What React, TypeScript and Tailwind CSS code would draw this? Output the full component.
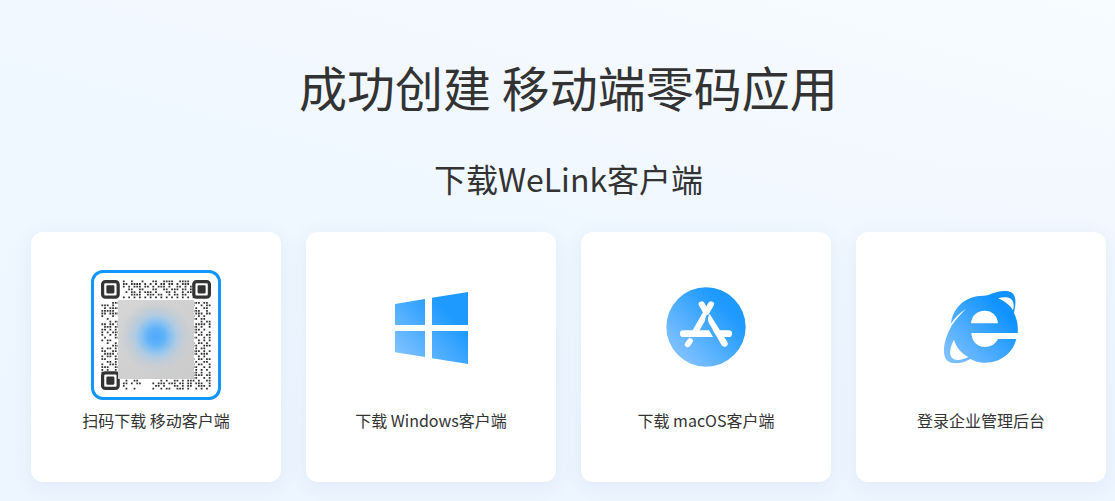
import type { ReactNode } from "react";

const TOP = [
  "#..#...#...##..####..####..",
  "##.####.#.#.#.##.##.#.###.#",
  "#.#.###.##.#.###.#..##.#.##",
  "..##..##...##..##.###.##.##",
  ".#.##.#.###.#...##.#..#.##.",
  "...####..###.##..#.##.##..#",
  "#.#.#.#.#.#.#.#.#.#.#.#.#.#",
];
const LEFT = [
  "....###", "###.#..", ".#.####", "#####..", "##.####", "#...#..", "..#....", "...#.##",
  "##.##.#", ".###.##", "##.#.#.", "#.#.###", "#..#.#.", ".#...##", "#.##...", "..#..#.",
  "....###", "#.##.#.", "##..##.", ".####.#", "#.##.#.", "##...##", "..##.#.", "#..###.",
  "###..##", "#.#..#.", "#...#.#",
];
const RIGHT = [
  "###.##.", "#..#.##", ".#..##.", "###..#.", ".###.##", "#.#.#..", "##.##..", "...#.##",
  ".####.#", "##.#..#", "###.#..", "##.#..#", "..##.##", "##..#.#", "..#.#.#", "#.##.#.",
  "##..###", ".#.##..", "###.#.#", "##.###.", "..#.#..", "#.##.##", ".#..##.", "#.##..#",
  "##..#.#", ".#.#.#.", "##.#..#",
];
const BOTTOM = [
  "#....#..#....#..#.##.#.#.#.",
  "##......#.......##.#.##.###",
  "........#....#..#.#.#.##..#",
  ".#..##........#.#..##.#.###",
  "##.#.##....#.###.###.##.##.",
  "#...........##.#...##.#.##.",
  ".#..#......#..#.##..###.#..",
];

function dots(rows: string[], x0: number, y0: number) {
  return rows
    .flatMap((row, y) =>
      [...row].map((cell, x) =>
        cell === "#" ? `M${x0 + x + 0.16} ${y0 + y + 0.16}h.66v.66h-.66z` : "",
      ),
    )
    .join("");
}

const QR_PATH =
  dots(TOP, 8, 0) +
  dots(LEFT, 0, 8) +
  dots(RIGHT, 34, 8) +
  dots(BOTTOM, 8, 34) +
  dots(RIGHT.slice(0, 6), 35, 35);

function Finder({ x, y }: { x: number; y: number }) {
  return (
    <g>
      <rect x={x + 0.6} y={y + 0.6} width="5.8" height="5.8" rx="1" fill="#fff" stroke="#333" strokeWidth="1.2" />
      <rect x={x + 2} y={y + 2} width="3" height="3" rx="0.4" fill="#333" />
    </g>
  );
}

function QrCode() {
  return (
    <div className="relative size-[130px] rounded-xl border-3 border-[#1296ff] bg-white p-[7px]">
      <svg viewBox="0 0 41 41" className="size-full" role="img" aria-label="移动客户端二维码">
        <path d={QR_PATH} fill="#333" />
        <Finder x={0} y={0} />
        <Finder x={34} y={0} />
        <Finder x={0} y={34} />
      </svg>
      <div className="absolute top-[27px] left-[24px] h-[79px] w-[76px] bg-[radial-gradient(circle_at_50%_46%,#52aafb_0,#5fb2fa_8px,#8bc2f0_15px,#b0cbe2_21px,#c6cdd4_28px,transparent_36px),linear-gradient(135deg,#d6d6d6,#cbcbcb)]" />
    </div>
  );
}

function WindowsIcon() {
  return (
    <svg viewBox="33 21 240 240" className="size-20" aria-hidden="true">
      <defs>
        <linearGradient id="win" gradientUnits="userSpaceOnUse" x1="45" y1="235" x2="200" y2="95">
          <stop stopColor="#86c5ff" />
          <stop offset="1" stopColor="#1e9aff" />
        </linearGradient>
      </defs>
      <path
        fill="url(#win)"
        d="M45 72L135 57V135H45ZM156 53L264 36V135H156ZM45 153H135V231L45 217ZM156 153H264V252L156 235Z"
      />
    </svg>
  );
}

function AppStoreIcon() {
  return (
    <svg viewBox="30 27 240 240" className="size-20" aria-hidden="true">
      <defs>
        <linearGradient id="store" gradientUnits="userSpaceOnUse" x1="65" y1="230" x2="210" y2="90">
          <stop stopColor="#80c1ff" />
          <stop offset="1" stopColor="#1e9aff" />
        </linearGradient>
      </defs>
      <circle cx="150" cy="147" r="119" fill="url(#store)" />
      <g fill="none" stroke="#fff" strokeLinecap="round">
        <path strokeWidth="18" d="M137 79L150 101M165 79L116 164" />
        <path strokeWidth="17" d="M102 189L95 199" />
        <path strokeWidth="20" d="M82 167H168" />
        <path strokeWidth="20" d="M192 167H218" />
      </g>
      <path d="M157 112C149 125 152 135 158 145L184 189" fill="none" stroke="url(#store)" strokeWidth="10" />
      <path d="M161 107C154 119 155 130 161 139L197 202C205 212 220 203 214 192L170 122Z" fill="#fff" />
    </svg>
  );
}

function ExplorerIcon() {
  return (
    <svg viewBox="27 27 240 240" className="size-20" aria-hidden="true">
      <defs>
        <linearGradient id="ie" gradientUnits="userSpaceOnUse" x1="50" y1="245" x2="210" y2="95">
          <stop stopColor="#80c1ff" />
          <stop offset="1" stopColor="#1093ff" />
        </linearGradient>
      </defs>
      <path
        fill="url(#ie)"
        fillRule="evenodd"
        d="M57 137C62 86 105 51 157 53L169 51C191 40 221 34 238 43C255 53 251 80 246 105C255 123 259 143 257 165H118C119 191 137 207 158 207C176 207 191 198 198 183H253C241 228 203 255 158 254C142 254 127 250 115 243C91 257 62 260 47 249C26 233 37 180 60 141C71 125 87 107 102 93C83 104 69 119 57 137ZM117 136H198C196 112 180 98 158 98C135 98 119 113 117 136ZM198 61C217 69 233 80 243 97C247 82 245 68 236 62C227 57 211 57 198 61ZM66 185C54 207 50 229 60 239C70 250 91 246 109 237C87 225 72 207 66 185Z"
      />
    </svg>
  );
}

function CardBody({ picture, label }: { picture: ReactNode; label: string }) {
  return (
    <>
      <span className="flex h-[130px] items-center justify-center">{picture}</span>
      <span className="mt-2 text-base leading-6">{label}</span>
    </>
  );
}

const CARD =
  "flex flex-col items-center rounded-xl bg-white pt-[38px] pb-[50px] shadow-[0_4px_20px_rgba(70,120,160,0.08)]";

const LINKS = [
  { label: "下载 Windows客户端", Icon: WindowsIcon },
  { label: "下载 macOS客户端", Icon: AppStoreIcon },
  { label: "登录企业管理后台", Icon: ExplorerIcon },
];

export default function App() {
  return (
    <main className="min-h-screen bg-[linear-gradient(180deg,rgba(237,245,255,0)_30%,#edf5ff_100%),linear-gradient(15deg,#eef6ff_0%,#f0f8ff_55%,#f4f8ff_75%,#f6fcff_100%)] pt-[50px] pr-[9px] pb-[19px] pl-[31px] font-['Noto_Sans_CJK_SC',sans-serif] text-[#333]">
      <h1 className="text-center text-5xl leading-[72px]">成功创建 移动端零码应用</h1>
      <h2 className="mt-8 text-center text-[32px] leading-12">下载WeLink客户端</h2>
      <div className="mt-[30px] grid grid-cols-4 gap-[25px]">
        <div className={CARD}>
          <CardBody picture={<QrCode />} label="扫码下载 移动客户端" />
        </div>
        {LINKS.map(({ label, Icon }) => (
          <a key={label} href="#" className={CARD}>
            <CardBody
              picture={
                <span className="pb-4">
                  <Icon />
                </span>
              }
              label={label}
            />
          </a>
        ))}
      </div>
    </main>
  );
}
